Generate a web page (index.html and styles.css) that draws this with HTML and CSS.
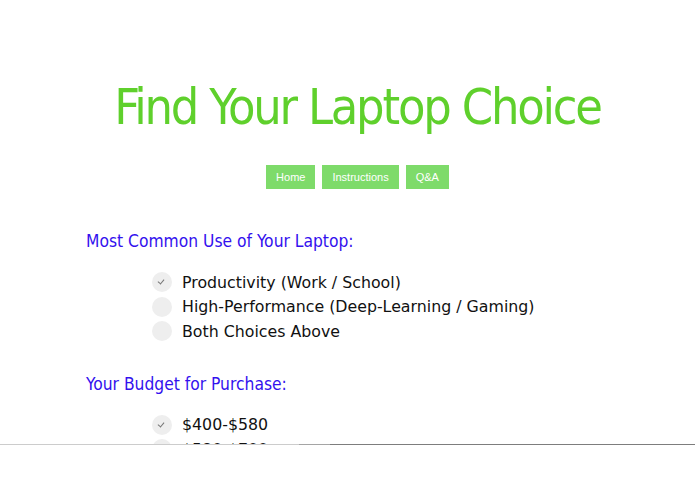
FILE: index.html
```html
<!DOCTYPE html>
<html>
<head>
<meta charset="utf-8">
<link rel="stylesheet" href="styles.css">
</head>
<body>
<div class="page">
  <h1 class="title">Find Your Laptop Choice</h1>
  <nav class="nav">
    <a class="nav-btn">Home</a>
    <a class="nav-btn">Instructions</a>
    <a class="nav-btn">Q&amp;A</a>
  </nav>
  <section class="question">
    <h2 class="q-title">Most Common Use of Your Laptop:</h2>
    <ul class="options">
      <li class="option"><span class="radio checked"></span>Productivity (Work / School)</li>
      <li class="option"><span class="radio"></span>High-Performance (Deep-Learning / Gaming)</li>
      <li class="option"><span class="radio"></span>Both Choices Above</li>
    </ul>
  </section>
  <section class="question">
    <h2 class="q-title">Your Budget for Purchase:</h2>
    <ul class="options">
      <li class="option"><span class="radio checked"></span>$400-$580</li>
      <li class="option"><span class="radio"></span>$580-$700</li>
      <li class="option"><span class="radio"></span>$700-$900</li>
    </ul>
  </section>
</div>
<div class="bottom-cover"></div>
</body>
</html>
```
FILE: styles.css
```css
html, body {
  margin: 0;
  padding: 0;
  background: #fff;
}
body {
  font-family: "DejaVu Sans", Verdana, sans-serif;
  color: #111;
}
.page {
  padding-top: 77px;
}
.title {
  margin: 0;
  padding-left: 20px;
  text-align: center;
  font-family: "DejaVu Sans Condensed", "DejaVu Sans", sans-serif;
  font-weight: normal;
  font-size: 50px;
  line-height: 60px;
  letter-spacing: -2.2px;
  color: #5fd02c;
}
.nav {
  display: flex;
  justify-content: center;
  gap: 7px;
  margin-top: 28px;
  padding-left: 20px;
}
.nav-btn {
  display: block;
  height: 24px;
  line-height: 24px;
  padding: 0 10px;
  background: #7edb6a;
  color: #fff;
  font-family: "Liberation Sans", Arial, sans-serif;
  font-size: 11px;
}
.question {
  padding-left: 86px;
}
.question:first-of-type {
  margin-top: 42px;
}
.q-title {
  margin: 0;
  font-family: "DejaVu Sans Condensed", "DejaVu Sans", sans-serif;
  font-weight: normal;
  font-size: 17.3px;
  line-height: 20px;
  color: #3311ee;
}
.options {
  list-style: none;
  margin: 19px 0 0;
  padding: 0 0 0 66px;
}
.option {
  display: flex;
  align-items: center;
  height: 24.5px;
  font-size: 15.8px;
}
.radio {
  position: relative;
  flex: none;
  width: 20px;
  height: 20px;
  border-radius: 50%;
  background: #eeeeee;
  margin-right: 10px;
}
.radio.checked::after {
  content: "";
  position: absolute;
  left: 7px;
  top: 6px;
  width: 3px;
  height: 5px;
  border-right: 1px solid #777;
  border-bottom: 1px solid #777;
  transform: rotate(40deg);
}
.question + .question {
  margin-top: 30px;
}
.bottom-cover {
  position: fixed;
  left: 0;
  right: 0;
  bottom: 0;
  height: 49px;
  background: #fff;
  border-top: 1px solid transparent;
  border-image: linear-gradient(to right, #cccccc 0, #cccccc 299px, #a5a5a5 299px, #a5a5a5 330px, #7d7d7d 330px) 1;
}
```
